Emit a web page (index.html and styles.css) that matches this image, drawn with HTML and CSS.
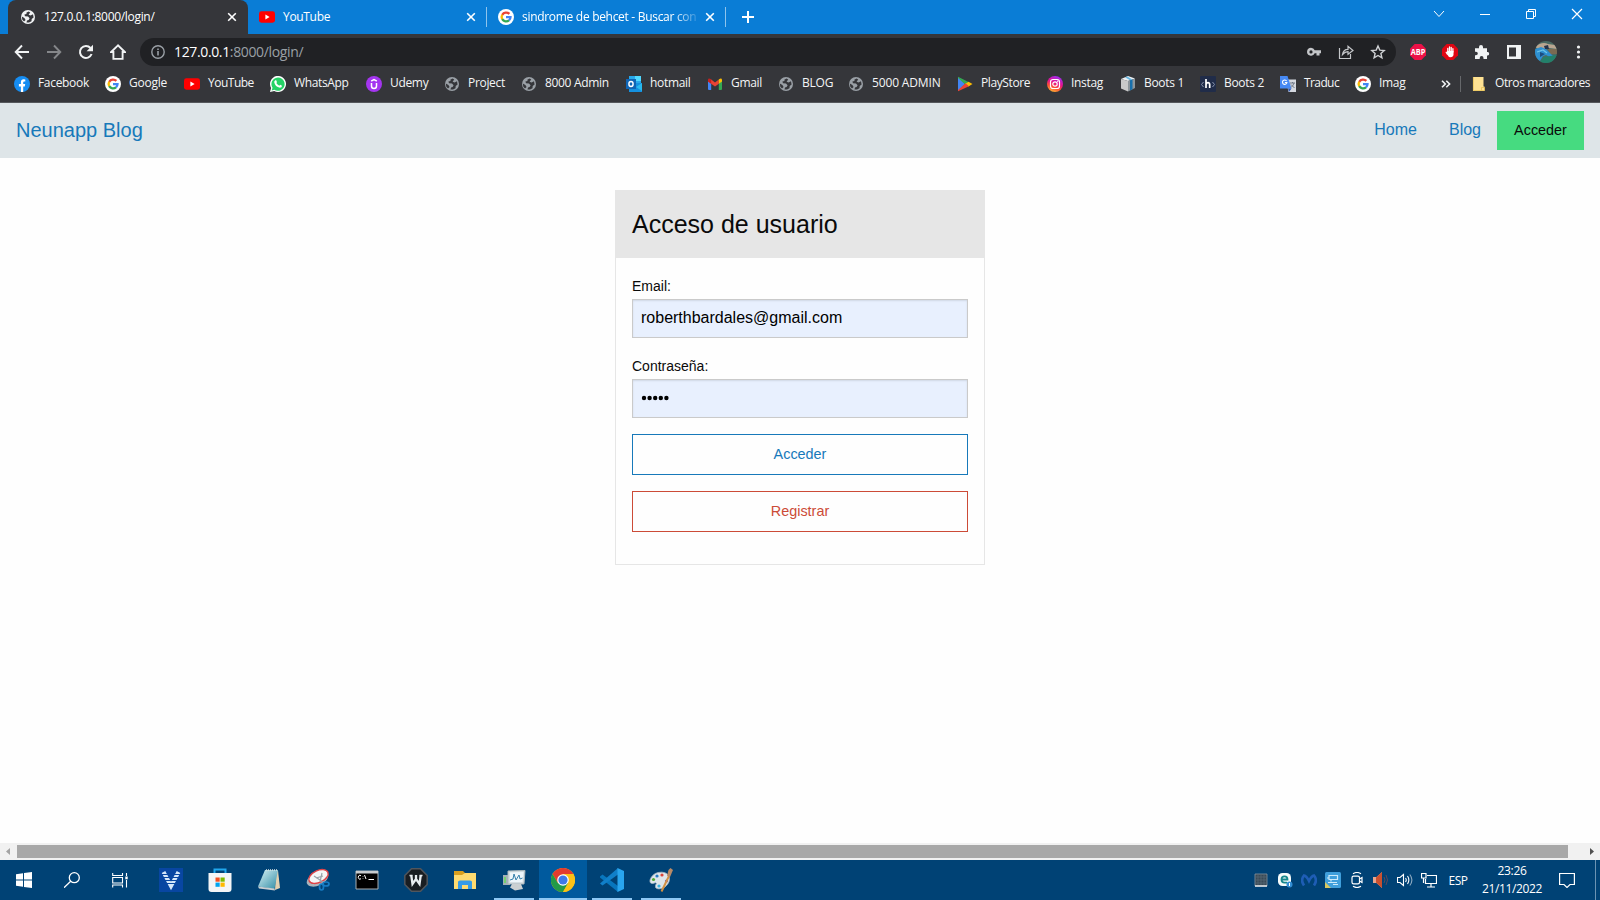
FILE: index.html
```html
<!DOCTYPE html>
<html lang="es">
<head>
<meta charset="utf-8">
<title>127.0.0.1:8000/login/</title>
<link rel="stylesheet" href="styles.css">
</head>
<body>
<svg class="defs" aria-hidden="true">
  <defs>
    <symbol id="globe" viewBox="0 0 16 16"><circle cx="8" cy="8" r="7" fill="currentColor"/><path class="cut" d="M8.5 2.4 6.3 3.7 6.6 5 4.4 5.4 5 7.2 8 7.6 9.6 9.2 8.600 11 7 11.600 6.500 13.500 9 13.600 11.500 12.200 11.700 10 13.600 8.600 13 5.300 10.600 6.400 8.600 5.800 10.200 3.600ZM1.800 7.600 4.400 8.900 5.600 11 4 12.500 2.300 10.700Z"/></symbol>
    <symbol id="google" viewBox="0 0 16 16"><circle cx="8" cy="8" r="8" fill="#fff"/><g fill="none" stroke-width="2.3"><path d="M4.2 5.8A4.6 4.6 0 0 1 11.4 4.9" stroke="#ea4335"/><path d="M4.2 10.2A4.7 4.7 0 0 1 4.2 5.8" stroke="#fbbc05"/><path d="M11 11.4A4.6 4.6 0 0 1 4.2 10.2" stroke="#34a853"/><path d="M8 8.2H12.5A4.6 4.6 0 0 1 11 11.4" stroke="#4285f4"/></g></symbol>
    <symbol id="youtube" viewBox="0 0 16 16"><rect y="2.3" width="16" height="11.4" rx="2.4" fill="#f00"/><path d="M6.4 5.6 10.6 8 6.4 10.4Z" fill="#fff"/></symbol>
    <symbol id="x" viewBox="0 0 10 10"><path d="M1.2 1.2 8.8 8.8M8.8 1.2 1.2 8.8" stroke="currentColor" stroke-width="1.6"/></symbol>
  </defs>
</svg>

<header class="tabstrip">
  <div class="tab active">
    <svg class="ic16 globe-light"><use href="#globe"/></svg><span class="tab-title">127.0.0.1:8000/login/</span><svg class="tab-x"><use href="#x"/></svg>
  </div>
  <div class="tab">
    <svg class="ic16"><use href="#youtube"/></svg><span class="tab-title">YouTube</span><svg class="tab-x"><use href="#x"/></svg>
  </div>
  <i class="tab-sep"></i>
  <div class="tab">
    <svg class="ic16"><use href="#google"/></svg><span class="tab-title faded">sindrome de behcet - Buscar con</span><svg class="tab-x"><use href="#x"/></svg>
  </div>
  <i class="tab-sep"></i>
  <svg class="newtab" viewBox="0 0 12 12"><path d="M6 0V12M0 6H12" stroke="#fff" stroke-width="2"/></svg>
  <div class="window-buttons">
    <svg viewBox="0 0 12 12"><path d="M1 3 6 8.500 11 3" fill="none" stroke="#fff"/></svg>
    <svg viewBox="0 0 12 12"><path d="M1 6.500H11" stroke="#fff"/></svg>
    <svg viewBox="0 0 12 12"><path d="M1.500 3.500H8.500V10.500H1.500ZM3.500 3V1.500H10.500V8.500H9" fill="none" stroke="#fff"/></svg>
    <svg viewBox="0 0 12 12"><path d="M1 1 11 11M11 1 1 11" stroke="#fff" stroke-width="1.200"/></svg>
  </div>
</header>

<div class="toolbar">
  <div class="nav-icons">
    <svg viewBox="0 0 16 16"><path d="M15 8H2M8 1.500 1.700 8 8 14.500" fill="none" stroke="#f1f3f4" stroke-width="1.900"/></svg>
    <svg viewBox="0 0 16 16"><path d="M1 8H14M8 1.500 14.300 8 8 14.500" fill="none" stroke="#85878a" stroke-width="1.900"/></svg>
    <svg viewBox="0 0 16 16"><path d="M13.600 10A6 6 0 1 1 12.500 4" fill="none" stroke="#f1f3f4" stroke-width="2"/><path d="M15 .8V7.200H8.600Z" fill="#f1f3f4"/></svg>
    <svg viewBox="0 0 16 16"><path d="M8 1.400 1.200 8H3.400V14.900H12.600V8H14.800Z" fill="none" stroke="#f1f3f4" stroke-width="1.900"/></svg>
  </div>
  <div class="omnibox">
    <svg class="info" viewBox="0 0 14 14"><circle cx="7" cy="7" r="6.200" fill="none" stroke="#9aa0a6" stroke-width="1.400"/><path d="M7 6V10.500M7 3.400V5" stroke="#9aa0a6" stroke-width="1.600"/></svg>
    <span class="url"><b>127.0.0.1</b>:8000/login/</span>
    <div class="omni-icons">
      <svg viewBox="0 0 16 16"><path fill-rule="evenodd" d="M5 3.700A4 4 0 1 0 8.700 9.300H10.500V11.500H13.500V9.300H15V6.300H8.700A4 4 0 0 0 5 3.700ZM5 6.300A1.600 1.600 0 1 1 5 9.500A1.600 1.600 0 0 1 5 6.300Z" fill="#c4c6c9"/></svg>
      <svg viewBox="0 0 16 16"><path d="M1.500 4V14.500H12.500V10M4.500 10.500C5 7 7 5.300 10 5.300V2.200L15 6.500 10 10.300V7.700C7.500 7.700 6 8.700 4.500 10.500Z" fill="none" stroke="#c4c6c9" stroke-width="1.200"/></svg>
      <svg viewBox="0 0 16 16"><path d="M8 2 9.800 6.100 14.200 6.500 10.900 9.400 11.900 13.800 8 11.500 4.100 13.800 5.100 9.400 1.800 6.500 6.200 6.100Z" fill="none" stroke="#d0d2d5" stroke-width="1.400"/></svg>
    </div>
  </div>
  <div class="extensions">
    <svg viewBox="0 0 16 16"><path d="M4.700 0H11.300L16 4.700V11.300L11.300 16H4.700L0 11.300V4.700Z" fill="#ed1147"/><text x="8" y="11" class="abp" textLength="14.600" lengthAdjust="spacingAndGlyphs">ABP</text></svg>
    <svg viewBox="0 0 16 16"><path d="M4.700 0H11.300L16 4.700V11.300L11.300 16H4.700L0 11.300V4.700Z" fill="#e00613"/><path d="M5.800 8.500V4.500M7.500 7V3M9.200 7V3.400M10.900 8V4.700M5.200 10 4.200 8.200" stroke="#fff" stroke-width="1.300" stroke-linecap="round"/><path d="M5.200 7H11.500V10.500Q11.300 13.300 8.500 13.300 6.500 13.300 5.200 10.500Z" fill="#fff"/></svg>
    <svg viewBox="0 0 16 16"><path d="M1 4.300H5V3A2 2 0 0 1 9 3V4.300H13V8H13.800A1.800 1.800 0 0 1 13.800 11.500H13V15H9.500V14A1.900 1.900 0 0 0 5.700 14V15H1V11.300H2A1.800 1.800 0 0 0 2 7.700H1Z" fill="#f1f3f4"/></svg>
    <svg viewBox="0 0 16 16"><path fill-rule="evenodd" d="M1 1H15V15H1ZM3 3.500V12.500H10V3.500Z" fill="#f1f3f4"/></svg>
    <svg class="avatar" viewBox="0 0 22 22"><clipPath id="av"><circle cx="11" cy="11" r="11"/></clipPath><g clip-path="url(#av)"><path d="M0 0H22V22H0Z" fill="#4b6a64"/><path d="M0 6Q7 0 13 3L20 4 22 8 14 7 5 9Z" fill="#b9a590"/><path d="M13 8 22 8V13L15 13Z" fill="#7a6a52"/><path d="M0 8 6 6 11 8 14 11 20 17 18 18 11 14 8 15 5 20 0 18Z" fill="#2e8fd0"/><path d="M9 5 13 4 14 8 10 8Z" fill="#26344c"/><path d="M5 11 10 13 5 16Z" fill="#1c4c80"/><path d="M9 16 22 14V22H4Z" fill="#23806a"/><path d="M2 11 8 9 12 12" fill="none" stroke="#6bc3e7" stroke-width="1.200"/></g></svg>
    <svg viewBox="0 0 16 16" fill="#f1f3f4"><circle cx="8.500" cy="3" r="1.600"/><circle cx="8.500" cy="8" r="1.600"/><circle cx="8.500" cy="13" r="1.600"/></svg>
  </div>
</div>

<nav class="bookmarks">
  <a class="b1"><svg viewBox="0 0 16 16"><circle cx="8" cy="8" r="8" fill="#168df2"/><path d="M6.900 16V10.400H4.900V8H6.900V6.300Q6.900 3.300 9.700 3.300L11.300 3.500V5.500H10.200Q9.200 5.500 9.200 6.500V8H11.200L10.800 10.400H9.200V16Z" fill="#fff"/></svg><span>Facebook</span></a>
  <a class="b2"><svg><use href="#google"/></svg><span>Google</span></a>
  <a class="b3"><svg><use href="#youtube"/></svg><span>YouTube</span></a>
  <a class="b4"><svg viewBox="0 0 16 16"><path d="M0 16 1.100 12A8 8 0 1 1 4.200 15Z" fill="#fff"/><path d="M1.700 14.400 2.500 11.800A6.600 6.600 0 1 1 4.400 13.700Z" fill="#25d366"/><path d="M5.200 4.200 6.200 4.200 7 6.200 6.300 7.100Q7.300 9 9.300 9.700L10.200 8.800 12 9.700Q12 11.700 10 11.800 5 11 4.200 6.100 4.200 5 5.200 4.200Z" fill="#fff"/></svg><span>WhatsApp</span></a>
  <a class="b5"><svg viewBox="0 0 16 16"><circle cx="8" cy="8" r="8" fill="#a435f0"/><path d="M5.500 7V10Q5.500 12.500 8 12.500T10.500 10V7M5.200 5.200 8 3.600 10.800 5.200" fill="none" stroke="#fff" stroke-width="1.500"/></svg><span>Udemy</span></a>
  <a class="b6"><svg class="globe"><use href="#globe"/></svg><span>Project</span></a>
  <a class="b7"><svg class="globe"><use href="#globe"/></svg><span>8000 Admin</span></a>
  <a class="b8"><svg viewBox="0 0 16 16"><path d="M3 0H15V8H3Z" fill="#28a8ea"/><path d="M9 0H15V5H9Z" fill="#50d9ff"/><path d="M3 7H16V16H3Z" fill="#1490df"/><path d="M16 7 10 11 16 15Z" fill="#28b9ee"/><path d="M0 3H10V13H0Z" fill="#0f65b5"/><ellipse cx="5" cy="8" rx="2.100" ry="2.500" fill="none" stroke="#fff" stroke-width="1.400"/></svg><span>hotmail</span></a>
  <a class="b9"><svg viewBox="0 0 16 16"><path d="M1 4H4.200V14H2Q1 14 1 13Z" fill="#4285f4"/><path d="M11.800 4H15V13Q15 14 14 14H11.800Z" fill="#34a853"/><path d="M1 4 4.200 3.600 8 6.500 11.800 3.600V7.800L8 10.600 1 5.500Z" fill="#ea4335"/><path d="M1 4Q1.300 1.500 4.200 3.500V7.800L1 5.500Z" fill="#c5221f"/><path d="M15 4Q14.700 1.500 11.800 3.500V7.800L15 5.500Z" fill="#fbbc04"/></svg><span>Gmail</span></a>
  <a class="b10"><svg class="globe"><use href="#globe"/></svg><span>BLOG</span></a>
  <a class="b11"><svg class="globe"><use href="#globe"/></svg><span>5000 ADMIN</span></a>
  <a class="b12"><svg viewBox="0 0 16 16"><path d="M1 1V15L8 8Z" fill="#4285f4"/><path d="M1 .8 11.500 6 8.500 8.800 1 2Z" fill="#34a853"/><path d="M11.500 5.700 15.500 8 11.500 10.500 8 8Z" fill="#fbbc04"/><path d="M1 15.300 12 10.200 8.500 7.300 1 14Z" fill="#ea4335"/></svg><span>PlayStore</span></a>
  <a class="b13"><svg viewBox="0 0 16 16"><defs><linearGradient id="ig" x1=".2" y1="1" x2=".6" y2="0"><stop offset="0" stop-color="#ffc633"/><stop offset=".35" stop-color="#fb4a37"/><stop offset=".6" stop-color="#e5118e"/><stop offset="1" stop-color="#a02bef"/></linearGradient></defs><circle cx="8" cy="8" r="8" fill="url(#ig)"/><g fill="none" stroke="#fff" stroke-width="1.200"><rect x="3.500" y="3.500" width="9" height="9" rx="2.500"/><circle cx="8" cy="8" r="2.200"/></g><circle cx="10.700" cy="5.300" r=".7" fill="#fff"/></svg><span>Instag</span></a>
  <a class="b14"><svg viewBox="0 0 16 16"><path d="M1 3 8 0 15 2.500 8 5Z" fill="#eef1f3"/><path d="M1 3 8 5V15.500L1 12.500Z" fill="#c9c9c9"/><path d="M8 5 15 2.500V12L8 15.500Z" fill="#8d959b"/><path d="M10 4.300 12.500 3.400V13.300L10 14.500Z" fill="#176fac"/><path d="M5 1.300 7.300 .4 12.500 3.400 10 4.300Z" fill="#66b5e0"/></svg><span>Boots 1</span></a>
  <a class="b15"><svg viewBox="0 0 16 16"><rect width="16" height="16" rx="1" fill="#202c49"/><path d="M6 3V12M6 8.500Q6.500 6.700 8 6.700T9.700 8.700V12" fill="none" stroke="#fff" stroke-width="1.700"/><path d="M3.500 6 1.500 8.500 3.500 11M12.500 6 14.500 8.500 12.500 11" fill="none" stroke="#8793ad"/></svg><span>Boots 2</span></a>
  <a class="b16"><svg viewBox="0 0 16 16"><path d="M6 3.500H16V16H8.500Z" fill="#d4d8df"/><path d="M0 0H7.500L11.500 12.500H0Z" fill="#4689f4"/><path d="M8 12.500H11.500L9 16Z" fill="#2c57b6"/><path d="M6.600 5A2.200 2.200 0 1 0 6.900 6.500H4.900" fill="none" stroke="#fff" stroke-width="1.100"/><path d="M10 7H15M12.500 6V7M14 7Q13 10 11 11.500M11 8.500 14.500 12" fill="none" stroke="#6d7785"/></svg><span>Traduc</span></a>
  <a class="b17"><svg><use href="#google"/></svg><span>Imag</span></a>
  <div class="bm-end">
    <svg class="more" viewBox="0 0 10 8"><path d="M1 .7 4.300 4 1 7.300M5.300 .7 8.600 4 5.300 7.300" fill="none" stroke="#f1f3f4" stroke-width="1.600"/></svg>
    <i class="bm-sep"></i>
    <svg class="folder" viewBox="0 0 13 14"><path d="M1 0H11.500V9.500H12.500V14H1Z" fill="#ffe293"/><path d="M1.400 0V13.600H9.500V10.500H12.500V13.600H9.500" fill="none" stroke="#e9c356" stroke-width=".8"/></svg>
    <span class="others">Otros marcadores</span>
  </div>
</nav>

<main class="page">
  <div class="site-bar">
    <a class="brand">Neunapp Blog</a>
    <div class="site-menu"><a class="m-home">Home</a><a class="m-blog">Blog</a><a class="access">Acceder</a></div>
  </div>
  <section class="card">
    <h1 class="card-head">Acceso de usuario</h1>
    <form class="card-body">
      <label>Email:</label>
      <div class="field">roberthbardales@gmail.com</div>
      <label>Contraseña:</label>
      <div class="field"><svg class="dots" viewBox="0 0 30 6"><circle cx="3" cy="3" r="2.200"/><circle cx="8.600" cy="3" r="2.200"/><circle cx="14.200" cy="3" r="2.200"/><circle cx="19.800" cy="3" r="2.200"/><circle cx="25.400" cy="3" r="2.200"/></svg></div>
      <div class="btn primary">Acceder</div>
      <div class="btn alert">Registrar</div>
    </form>
  </section>
</main>

<div class="scrollbar">
  <svg viewBox="0 0 17 17"><path d="M10 5V12L6 8.500Z" fill="#a3a3a3"/></svg>
  <div class="thumb"></div>
  <svg viewBox="0 0 17 17"><path d="M7 5V12L11 8.500Z" fill="#505050"/></svg>
</div>

<footer class="taskbar">
  <div class="system">
    <div class="app"><svg class="s16" viewBox="0 0 16 16" fill="#fff"><path d="M0 2.200 7 1.200V7.500H0ZM8 1.100 16 0V7.500H8ZM0 8.500H7V14.800L0 13.800ZM8 8.500H16V16L8 14.900Z"/></svg></div>
    <div class="app"><svg class="s16" viewBox="0 0 16 16" fill="none" stroke="#fff" stroke-width="1.300"><circle cx="10.300" cy="5.700" r="5"/><path d="M6.700 9.300 0 15.700"/></svg></div>
    <div class="app"><svg class="s16" viewBox="0 0 16 16" fill="none" stroke="#fff" stroke-width="1.100"><path d="M.7 1V3.500H10.500V1M.7 15.500V13H10.500V15.500M.7 5.500H10.500V11H.7ZM14.500 1V4M14.500 8V15.500"/><path d="M13.300 4.500H15.700V7.300H13.300Z" fill="#fff" stroke="none"/></svg></div>
  </div>
  <div class="apps">
    <div class="app"><svg viewBox="0 0 24 24"><path d="M0 0H24V24H0Z" fill="#0846a2"/><path d="M4.500 4 12 18 19.500 4" fill="none" stroke="#d5e7fa" stroke-width="4"/><path d="M0 6.500H24M0 9.500H24M0 12.500H24M0 15.500H24" stroke="#0846a2" stroke-width="1.200"/></svg></div>
    <div class="app"><svg viewBox="0 0 24 24"><path d="M6.500 6V1.500H17.500V6" fill="none" stroke="#20a8ee" stroke-width="2"/><path d="M.5 5H23.500V21Q23.500 24 20.500 24H3.500Q.5 24 .5 21Z" fill="#f4f5f6"/><path d="M7.500 9.500H11.700V13.700H7.500Z" fill="#f25022"/><path d="M12.500 9.500H16.700V13.700H12.500Z" fill="#7fba00"/><path d="M7.500 14.600H11.700V18.800H7.500Z" fill="#00a4ef"/><path d="M12.500 14.600H16.700V18.800H12.500Z" fill="#ffb900"/></svg></div>
    <div class="app"><svg viewBox="0 0 24 24"><defs><linearGradient id="np" x2="1" y2="1"><stop stop-color="#d9f2f5"/><stop offset="1" stop-color="#2f8ca5"/></linearGradient></defs><path d="M19 3 21 2.500 23 20 18 22Z" fill="#e1d0b0"/><path d="M8 2H21L17.500 21 1 18.500Z" fill="url(#np)"/><path d="M1 18.500 17.500 20.500 18 22.500 2 20.500Z" fill="#c8ced1"/><path d="M9 2H21" stroke="#d7e2e4" stroke-width="1.600" stroke-dasharray="1 1"/></svg></div>
    <div class="app"><svg viewBox="0 0 24 24"><ellipse cx="11.500" cy="11" rx="11.500" ry="6.500" transform="rotate(-25 11.500 11)" fill="#a9b4bc"/><ellipse cx="12.500" cy="8.500" rx="10.300" ry="6" transform="rotate(-25 12.500 8.500)" fill="#f5f6f7" stroke="#df4348" stroke-width="1.400"/><path d="M8 8 17 14M16 5 14 14M10 10 17 8" stroke="#98a1a9" stroke-width="1.200"/><g fill="none" stroke="#167cc4" stroke-width="1.700"><ellipse cx="15.500" cy="19" rx="2" ry="3"/><ellipse cx="20" cy="16" rx="3" ry="2"/></g></svg></div>
    <div class="app"><svg viewBox="0 0 24 24"><path d="M1 3H23V21H1Z" fill="#000" stroke="#a9adb0"/><path d="M1 3H23V5.500H1Z" fill="#c7cbce"/><path d="M6 8A1.500 2 0 1 0 6 10.500M8 8V8.500M8 10V10.500M9.500 7 11 11M13.500 11.500H19" fill="none" stroke="#fff"/></svg></div>
    <div class="app"><svg viewBox="0 0 24 24"><path d="M7.500 .8H16.500L23.200 7.500V16.500L16.500 23.200H7.500L.8 16.500V7.500Z" fill="#191d22" stroke="#50565d" stroke-width="1.500"/><path d="M5.500 7.500H8.500M15.500 7.500H18.500" stroke="#e9edf1" stroke-width="1.500"/><path d="M7.300 7.500 8.500 16 12 11 15.500 16 16.700 7.500M12 7V12" fill="none" stroke="#e9edf1" stroke-width="2.300"/></svg></div>
    <div class="app"><svg viewBox="0 0 24 24"><path d="M1 3H10L12 5H23V9H1Z" fill="#d99f1e"/><path d="M1 7H9L12 5H23V21H1Z" fill="#ffdb70"/><path d="M5 21V14Q5 12.500 7 12.500H17Q19 12.500 19 14V21H15V17H9V21Z" fill="#359be8"/></svg></div>
    <div class="app open"><svg viewBox="0 0 24 24"><path d="M1 7H8V17H1Z" fill="#a3b1b6"/><path d="M3 9V15" stroke="#65dc58" stroke-width="1.500"/><path d="M6 3 23 2.500 22 16 6 16Z" fill="#d6dfe3" stroke="#aab5ba"/><path d="M8 4.500 21.500 4 20.500 14H8Z" fill="#eef6fb"/><path d="M8 12 11 11 12 6 14 12 17 7 18 11 20.500 10" fill="none" stroke="#3781ac"/><path d="M10 16H19L21 21 13 22.500 8 19.500Z" fill="#cbd0d2"/></svg></div>
    <div class="app open current"><svg viewBox="0 0 24 24"><circle cx="12" cy="12" r="12" fill="#fbc116"/><path d="M1.600 6A12 12 0 0 1 22.400 6H12L6.800 15Z" fill="#e33b2e"/><path d="M1.600 6A12 12 0 0 0 12 24L17.200 15H6.800Z" fill="#229a48"/><path d="M12 6H22.400A12 12 0 0 1 12 24L17.200 15Z" fill="#fbc116"/><circle cx="12" cy="12" r="5.800" fill="#fff"/><circle cx="12" cy="12" r="4.600" fill="#3e79e8"/></svg></div>
    <div class="app open"><svg viewBox="0 0 24 24"><path d="M0 8.500 2.500 6.500 18 18V24L0 9.500Z" fill="#0876bd"/><path d="M0 15.500 18 0V6.500L2.500 17.500Z" fill="#107fc9"/><path d="M17.500 0 24 3V21L17.500 24Z" fill="#29a5ee"/></svg></div>
    <div class="app open"><svg viewBox="0 0 24 24"><path d="M9 4.500Q17 3 20 8 22 14 16 19 9 22.500 6.500 19.500 6 17 7.500 15.500 7 14 4 15.500.500 16 1 12 3 6 9 4.500Z" fill="#dfe6eb" stroke="#a2b4c2" stroke-width=".8"/><circle cx="4.500" cy="11.500" r="1.600" fill="#52aa34"/><circle cx="8" cy="8" r="1.600" fill="#287bc5"/><circle cx="13" cy="7" r="1.600" fill="#d94439"/><circle cx="17.500" cy="13" r="1.600" fill="#7a56b4"/><circle cx="10" cy="18" r="1.600" fill="#38b1e1"/><path d="M12.500 23.500 20 8" stroke="#d39245" stroke-width="2"/><path d="M18 8 19.500 2 21.500 0 24 2 21 9Z" fill="#b98a66"/></svg></div>
  </div>
  <div class="tray">
    <svg viewBox="0 0 16 16"><path d="M2 2H14V14H2Z" fill="#394956" stroke="#8b959d" stroke-width=".8"/><path d="M5 2V13M8 2V13M11 2V13M2 5H14M2 8H14M2 11H14" stroke="#566773" stroke-width=".8"/><path d="M2 14H14" stroke="#f2f4f5" stroke-width="1.400"/></svg>
    <svg viewBox="0 0 16 16"><rect x="1" y="1" width="13" height="13" rx="4.500" fill="#f5fbfb"/><path d="M4.800 7.500H10.500Q10.500 4.300 7.500 4.300 4.500 4.300 4.500 7.500T7.500 10.700H10" fill="none" stroke="#14868b" stroke-width="1.800"/><circle cx="12.500" cy="12.500" r="3" fill="#328ed5"/><path d="M12.500 11V14" stroke="#fff"/></svg>
    <svg viewBox="0 0 16 16"><path d="M3 13.500Q-.8 8 3 3.500 5.500 4 8 9 10.500 4 13 3.500 16.800 8 13 13.500" fill="none" stroke="#1e5db5" stroke-width="2.600"/></svg>
    <svg viewBox="0 0 16 16"><rect width="16" height="16" rx="1.500" fill="#3f9fdc"/><path d="M0 10 6 16H0Z" fill="#d8c860"/><path d="M4 3.500H12.500V7.500H4ZM6 7.500V9.500M3 10.500H12M8 12.500H13M2 6H4" fill="none" stroke="#cdeafa" stroke-width="1.200"/></svg>
    <svg viewBox="0 0 16 16" fill="none" stroke="#fff" stroke-width="1.200"><path d="M4 1.700Q8 -.7 12 1.700M4 14.300Q8 16.700 12 14.300"/><rect x="3" y="4.200" width="7.500" height="7.600" rx="1.600"/><path d="M10.500 7 13 5.500V10.500L10.500 9"/></svg>
    <svg viewBox="0 0 16 16"><path d="M0 5H3.500L9 0V16L3.500 11H0Z" fill="#e8a48c"/><path d="M3 5.500 9 0V16L3 10.500Z" fill="#c9502f"/><path d="M11 5Q13 8 11 11M13 3Q16 8 13 13" fill="none" stroke="#5d4858"/></svg>
    <svg viewBox="0 0 16 16" fill="none" stroke="#fff" stroke-width="1.100"><path d="M.5 5.500H3L6.500 2.500V13.500L3 10.500H.5ZM8.500 6Q10 8 8.500 10M10.500 4Q13.200 8 10.500 12"/><path d="M12.800 2.500Q17 8 12.800 13.500" stroke="#8ba9c0"/></svg>
    <svg viewBox="0 0 16 16" fill="none" stroke="#fff" stroke-width="1.200"><path d="M6 3.500H15.500V11.500H4.500V7M10 11.500V15M6 15H14M.5 1.500H5V6H.5ZM2.500 6V11"/></svg>
    <span class="lang">ESP</span>
    <div class="clock"><span>23:26</span><span>21/11/2022</span></div>
    <svg class="notice" viewBox="0 0 16 16"><path d="M.6 1.500H15.400V12.500H11L8 15.500 5 12.500H.6Z" fill="none" stroke="#fff" stroke-width="1.200"/></svg>
    <i class="desk"></i>
  </div>
</footer>
</body>
</html>
```
FILE: styles.css
```css
* { box-sizing: border-box; }
body {
  margin: 0;
  width: 1600px;
  height: 900px;
  overflow: hidden;
  display: flex;
  flex-direction: column;
  background: #fefefe;
  font-family: "Open Sans", "Noto Sans", sans-serif;
  font-size: 12px;
}
svg { display: block; flex: none; }
.defs { position: absolute; width: 0; height: 0; }
.cut { fill: #35363a; }

/* Tab strip */
.tabstrip { height: 34px; flex: none; display: flex; background: #0a7dd6; color: #fff; padding-left: 8px; }
.tab { display: flex; align-items: center; height: 34px; width: 238px; padding: 0 10px 0 11px; }
.tab.active { width: 240px; background: #35363a; border-radius: 8px 8px 0 0; padding: 0 11px 0 12px; }
.tab-title { flex: 1; margin: 0 8px; white-space: nowrap; letter-spacing: -.32px; line-height: 18px; }
.tab-title.faded { -webkit-mask-image: linear-gradient(90deg, #000 150px, transparent 180px); mask-image: linear-gradient(90deg, #000 150px, transparent 180px); letter-spacing: -.3px; }
.ic16 { width: 16px; height: 16px; }
.globe-light { color: #f1f3f4; }
.tab-x { width: 10px; height: 10px; }
.tab-sep { width: 1px; height: 20px; margin-top: 7px; background: #8fc4ec; }
.newtab { width: 12px; height: 12px; margin: 11px 0 0 16px; }
.window-buttons { display: flex; margin-left: auto; padding: 8px 17px 0 0; gap: 34px; }
.window-buttons svg { width: 12px; height: 12px; }

/* Address row */
.toolbar { height: 36px; flex: none; background: #35363a; display: flex; align-items: center; }
.nav-icons { display: flex; gap: 16px; width: 140px; padding-left: 14px; }
.nav-icons svg { width: 16px; height: 16px; }
.omnibox { width: 1256px; height: 28px; border-radius: 14px; background: #202124; display: flex; align-items: center; padding: 0 10px 0 11px; }
.info { width: 14px; height: 14px; }
.url { margin-left: 9px; font-size: 14px; letter-spacing: -.36px; color: #9aa0a6; line-height: 20px; }
.url b { font-weight: 400; color: #fff; }
.omni-icons { display: flex; gap: 16px; margin-left: auto; }
.omni-icons svg, .extensions svg { width: 16px; height: 16px; }
.extensions { display: flex; align-items: center; gap: 16px; padding-left: 14px; }
.extensions .avatar { width: 22px; height: 22px; margin: 0 -3px; }
.abp { fill: #fff; font: 700 8px "Open Sans", sans-serif; text-anchor: middle; }

/* Bookmarks */
.bookmarks { height: 33px; flex: none; display: flex; align-items: center; background: #35363a; color: #f4f5f6; border-bottom: 1px solid #55585c; padding: 0 10px 4px 14px; }
.bookmarks a { display: flex; align-items: center; gap: 8px; flex: none; white-space: nowrap; letter-spacing: -.32px; }
.bookmarks a svg { width: 16px; height: 16px; }
.bookmarks span { line-height: 16px; margin-bottom: 2px; }
.bookmarks .globe { color: #9aa0a6; }
.bookmarks .b1 { width: 91px; }
.bookmarks .b2 { width: 79px; letter-spacing: -.22px; }
.bookmarks .b3 { width: 86px; letter-spacing: -.5px; }
.bookmarks .b4 { width: 96px; letter-spacing: -.35px; }
.bookmarks .b5 { width: 78px; }
.bookmarks .b6 { width: 77px; }
.bookmarks .b7 { width: 105px; }
.bookmarks .b8 { width: 81px; }
.bookmarks .b9 { width: 71px; }
.bookmarks .b10 { width: 70px; letter-spacing: -.22px; }
.bookmarks .b11 { width: 109px; letter-spacing: -.15px; }
.bookmarks .b12 { width: 90px; letter-spacing: -.4px; }
.bookmarks .b13 { width: 73px; }
.bookmarks .b14, .bookmarks .b15 { width: 80px; }
.bookmarks .b16 { width: 75px; letter-spacing: -.6px; }
.bookmarks .b17 { width: 86px; }
.bm-end { display: flex; align-items: center; white-space: nowrap; }
.more { width: 10px; height: 8px; }
.bm-sep { width: 1px; height: 16px; margin: 0 11px 0 9px; background: #66686b; }
.folder { width: 13px; height: 14px; }
.others { margin-left: 10px; letter-spacing: -.4px; }

/* Blog page */
.page { flex: 1; font-family: "Liberation Sans", Arial, sans-serif; color: #0a0a0a; }
.site-bar { height: 55px; display: flex; justify-content: space-between; align-items: flex-start; background: #dee5e8; padding: 8px 16px; }
.brand { color: #1779ba; font-size: 20px; line-height: 38px; }
.site-menu { display: flex; color: #1779ba; font-size: 16px; line-height: 37px; }
.m-home { margin-right: 32px; }
.m-blog { margin-right: 16px; }
.access { width: 87px; height: 39px; background: #46db80; color: #0a0a0a; font-size: 14.4px; line-height: 38px; text-align: center; }
.card { width: 370px; height: 375px; margin: 32px auto 0; border: 1px solid #e6e6e6; }
.card-head { margin: 0; height: 67px; padding: 0 16px; background: #e6e6e6; font-size: 25px; font-weight: 400; line-height: 67px; }
.card-body { padding: 16px; }
.card-body label { display: block; height: 25px; font-size: 14px; line-height: 25px; }
.field { height: 39px; margin-bottom: 16px; border: 1px solid #cacaca; background: #e8f0fe; box-shadow: inset 0 1px 2px rgba(10, 10, 10, .1); padding: 0 8px; font-size: 16px; line-height: 35px; color: #000; }
.dots { width: 30px; height: 6px; margin-top: 15px; }
.btn { height: 41px; margin-bottom: 16px; border: 1px solid; text-align: center; font-size: 14.4px; line-height: 38px; }
.primary { color: #1779ba; }
.alert { color: #cc4b37; }

/* Horizontal scrollbar */
.scrollbar { height: 17px; flex: none; display: flex; align-items: center; background: #f1f1f1; }
.scrollbar svg { width: 17px; height: 17px; }
.thumb { width: 1551px; height: 13px; background: #a8a8a8; margin-right: 15px; }

/* Taskbar */
.taskbar { height: 40px; flex: none; display: flex; background: #004275; color: #fff; }
.system { display: flex; width: 147px; }
.apps { display: flex; gap: 1px; }
.app { width: 48px; height: 40px; display: flex; align-items: center; justify-content: center; }
.app svg { width: 24px; height: 24px; }
.app .s16 { width: 16px; height: 16px; }
.app.open { background: linear-gradient(#8ec8f4, #8ec8f4) center bottom / 40px 2px no-repeat; }
.app.current { background: linear-gradient(#8ec8f4, #8ec8f4) center bottom / 48px 2px no-repeat #005a9e; }
.tray { margin-left: auto; display: flex; align-items: center; gap: 8px; }
.tray svg { width: 16px; height: 16px; }
.lang { width: 26px; text-align: center; letter-spacing: -.5px; }
.clock { width: 66px; display: flex; flex-direction: column; text-align: center; line-height: 18px; letter-spacing: -.35px; }
.tray .notice { margin-left: 6px; }
.desk { width: 5px; height: 40px; margin-left: 12px; border-left: 1px solid #6b93b3; }
```
